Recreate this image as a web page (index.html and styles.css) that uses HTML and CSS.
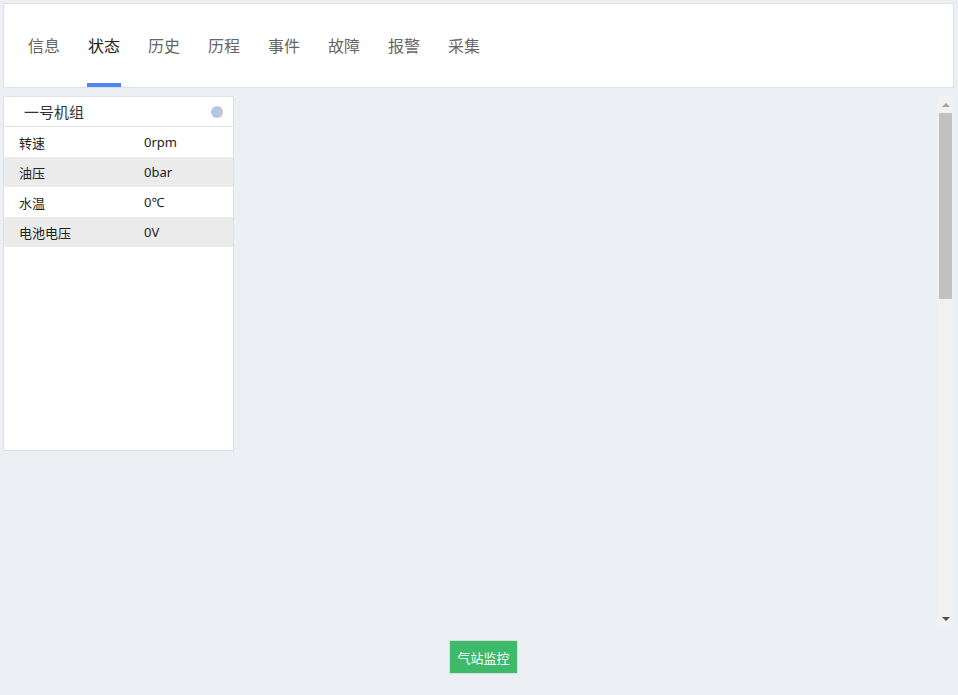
FILE: index.html
```html
<!DOCTYPE html>
<html lang="zh-CN">
<head>
<meta charset="utf-8">
<link rel="stylesheet" href="styles.css">
</head>
<body>
<div class="page">
  <header class="topbar">
    <nav class="tabs">
      <span class="tab">信息</span>
      <span class="tab active">状态</span>
      <span class="tab">历史</span>
      <span class="tab">历程</span>
      <span class="tab">事件</span>
      <span class="tab">故障</span>
      <span class="tab">报警</span>
      <span class="tab">采集</span>
    </nav>
  </header>
  <main class="content">
    <div class="cards">
      <section class="card">
        <div class="card-head">
          <span class="card-title">一号机组</span>
          <span class="dot"></span>
        </div>
        <div class="row"><span class="label">转速</span><span class="value">0rpm</span></div>
        <div class="row alt"><span class="label">油压</span><span class="value">0bar</span></div>
        <div class="row"><span class="label">水温</span><span class="value">0℃</span></div>
        <div class="row alt"><span class="label">电池电压</span><span class="value">0V</span></div>
      </section>
    </div>
    <div class="scrollbar">
      <div class="arrow up"></div>
      <div class="thumb-track"><div class="thumb"></div></div>
      <div class="arrow down"></div>
    </div>
  </main>
  <footer class="footer">
    <button class="btn">气站监控</button>
  </footer>
</div>
</body>
</html>
```
FILE: styles.css
```css
* { box-sizing: border-box; }
html, body { margin: 0; padding: 0; }
body {
  background: #eceff4;
  font-family: "Noto Sans", "Noto Sans CJK SC", sans-serif;
  width: 958px;
  height: 695px;
  overflow: hidden;
}
.page {
  padding: 3px 4px 0 3px;
}
.topbar {
  height: 85px;
  background: #fff;
  border: 1px solid #e0e0e0;
  display: flex;
  align-items: flex-end;
}
.tabs {
  display: flex;
  gap: 26px;
  padding-left: 23px;
  height: 83px;
}
.tab {
  font-family: "Noto Sans CJK SC", sans-serif;
  font-size: 16px;
  color: #666;
  padding: 2px 1px 0;
  display: flex;
  align-items: center;
  height: 100%;
  border-bottom: 4px solid transparent;
  line-height: 1;
}
.tab.active {
  color: #222;
  border-bottom-color: #4f86f7;
}
.content {
  margin-top: 8px;
  height: 531px;
  display: flex;
  justify-content: space-between;
}
.cards { display: flex; align-items: flex-start; }
.card {
  width: 231px;
  height: 355px;
  background: #fff;
  border: 1px solid #e0e0e0;
}
.card-head {
  height: 30px;
  border-bottom: 1px solid #e0e0e0;
  display: flex;
  align-items: center;
  justify-content: space-between;
  padding: 0 10px 0 20px;
}
.card-title {
  font-family: "Noto Sans CJK SC", sans-serif;
  font-size: 15px;
  color: #333;
}
.dot {
  width: 12px;
  height: 12px;
  border-radius: 50%;
  background: #b6c7dd;
}
.row {
  height: 30px;
  display: grid;
  grid-template-columns: 125px 1fr;
  align-items: center;
  padding-left: 15px;
  font-size: 13px;
  color: #222;
}
.row.alt { background: #ebebeb; }
.label { font-family: "Noto Sans CJK SC", sans-serif; }
.scrollbar {
  width: 17px;
  background: #f1f1f1;
  display: flex;
  flex-direction: column;
  align-items: center;
}
.arrow {
  height: 17px;
  width: 100%;
  display: flex;
  align-items: center;
  justify-content: center;
}
.arrow::before {
  content: "";
  width: 0; height: 0;
  border-left: 4px solid transparent;
  border-right: 4px solid transparent;
}
.arrow.up::before { border-bottom: 4px solid #a3a3a3; }
.arrow.down::before { border-top: 4px solid #505050; }
.thumb-track { flex: 1; width: 100%; display: flex; justify-content: center; }
.thumb {
  width: 13px;
  height: 186px;
  background: #c1c1c1;
}
.footer {
  display: flex;
  padding-top: 13px;
  padding-left: 446px;
}
.btn {
  width: 69px;
  height: 34px;
  background: #3dba6a;
  border: 1px solid #dcdcdc;
  color: #fff;
  font-family: "Noto Sans CJK SC", sans-serif;
  font-size: 13px;
  padding: 0;
}
```
